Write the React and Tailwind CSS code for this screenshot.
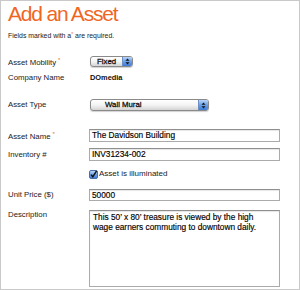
function Arrows() {
  return (
    <svg width="5" height="7" viewBox="0 0 5 7" className="block">
      <path d="M0.5 2.8 L2.5 0.6 L4.5 2.8 Z" fill="#111" />
      <path d="M0.5 4.2 L2.5 6.4 L4.5 4.2 Z" fill="#111" />
    </svg>
  );
}

function PopUp({ className, label, textClass }) {
  return (
    <div
      className={`flex items-stretch overflow-hidden rounded-[3px] border border-[#8a8a8a] bg-gradient-to-b from-white via-[#f4f4f4] to-[#d4d4d4] shadow-[0_1px_1px_rgba(0,0,0,0.18)] ${className}`}
    >
      <div className={`flex flex-1 items-center text-[7.8px] leading-none text-[#111] [-webkit-text-stroke:0.3px_#111] ${textClass}`}>
        {label}
      </div>
      <div className="flex w-[10px] items-center justify-center border-l border-[#6b8fc4] bg-gradient-to-b from-[#b9d4f6] via-[#6aa0e6] to-[#3d7bd6]">
        <Arrows />
      </div>
    </div>
  );
}

function Label({ children, req, className = "" }) {
  return (
    <div className={`w-[81px] shrink-0 text-[7.8px] leading-[10px] text-[#222] ${className}`}>
      {children}
      {req && <span className="relative top-[-3px] ml-[2px] text-[6px] text-[#f06a1f]">*</span>}
    </div>
  );
}

function Input({ children, className = "" }) {
  return (
    <div
      className={`flex w-[191px] items-center border border-[#ababab] border-t-[#8f8f8f] bg-white pl-[2px] text-[8.3px] leading-none text-black [-webkit-text-stroke:0.15px_#000] shadow-[inset_0_1px_1px_rgba(0,0,0,0.1)] ${className}`}
    >
      {children}
    </div>
  );
}

export default function App() {
  return (
    <div className="flex h-[290px] w-[300px] flex-col border border-[#c9c9c9] bg-white pl-[7px] font-['Liberation_Sans',Arial,sans-serif]">
      <div className="mt-[1px] text-[21px] leading-[24px] tracking-[-1.2px] text-[#f0661f]">Add an Asset</div>
      <div className="mt-[5px] text-[6.9px] leading-[10px] text-[#222]">
        Fields marked with a
        <span className="relative top-[-2px] text-[5px] text-[#f06a1f]">*</span> are required.
      </div>

      <div className="mt-[15px] flex items-start">
        <Label req className="pt-[2px]">Asset Mobility</Label>
        <PopUp className="ml-[1px] h-[11px] w-[43px]" label="Fixed" textClass="pl-[6px]" />
      </div>

      <div className="mt-[5px] flex items-start">
        <Label>Company Name</Label>
        <div className="ml-[1px] text-[7.4px] font-bold leading-[10px] text-[#111]">DOmedia</div>
      </div>

      <div className="mt-[16px] flex items-start">
        <Label className="pt-[1px]">Asset Type</Label>
        <PopUp className="ml-[1px] h-[12px] w-[119px]" label="Wall Mural" textClass="pl-[14px]" />
      </div>

      <div className="mt-[18px] flex items-start">
        <Label req className="pt-[3px]">Asset Name</Label>
        <Input className="h-[13px]">The Davidson Building</Input>
      </div>

      <div className="mt-[6px] flex items-start">
        <Label className="pt-[2px]">Inventory #</Label>
        <Input className="h-[13px]">INV31234-002</Input>
      </div>

      <div className="mt-[8px] flex items-center">
        <div className="w-[81px] shrink-0" />
        <svg width="9" height="9" viewBox="0 0 9 9" className="block">
          <defs>
            <linearGradient id="cb" x1="0" y1="0" x2="0" y2="1">
              <stop offset="0" stopColor="#c4dcf8" />
              <stop offset="0.5" stopColor="#6ea3e6" />
              <stop offset="1" stopColor="#3a77d2" />
            </linearGradient>
          </defs>
          <rect x="0.5" y="0.5" width="8" height="8" rx="1.5" fill="url(#cb)" stroke="#4a6fa8" strokeWidth="1" />
          <path d="M2 4.6 L3.8 6.8 L7.6 0.8" fill="none" stroke="#111" strokeWidth="1.5" />
        </svg>
        <div className="ml-[1px] text-[8px] leading-[10px] text-[#222]">Asset is illuminated</div>
      </div>

      <div className="mt-[10px] flex items-start">
        <Label className="pt-[1px]">Unit Price ($)</Label>
        <Input className="h-[12px]">50000</Input>
      </div>

      <div className="mt-[9px] flex items-start">
        <Label className="pt-[0px]">Description</Label>
        <div className="h-[77px] w-[191px] border border-[#ababab] border-t-[#8f8f8f] bg-white pl-[3px] pt-[1px] text-[8.3px] leading-[10px] text-black [-webkit-text-stroke:0.15px_#000] shadow-[inset_0_1px_1px_rgba(0,0,0,0.1)]">
          <div>This 50’ x 80’ treasure is viewed by the high</div>
          <div>wage earners commuting to downtown daily.</div>
        </div>
      </div>
    </div>
  );
}
